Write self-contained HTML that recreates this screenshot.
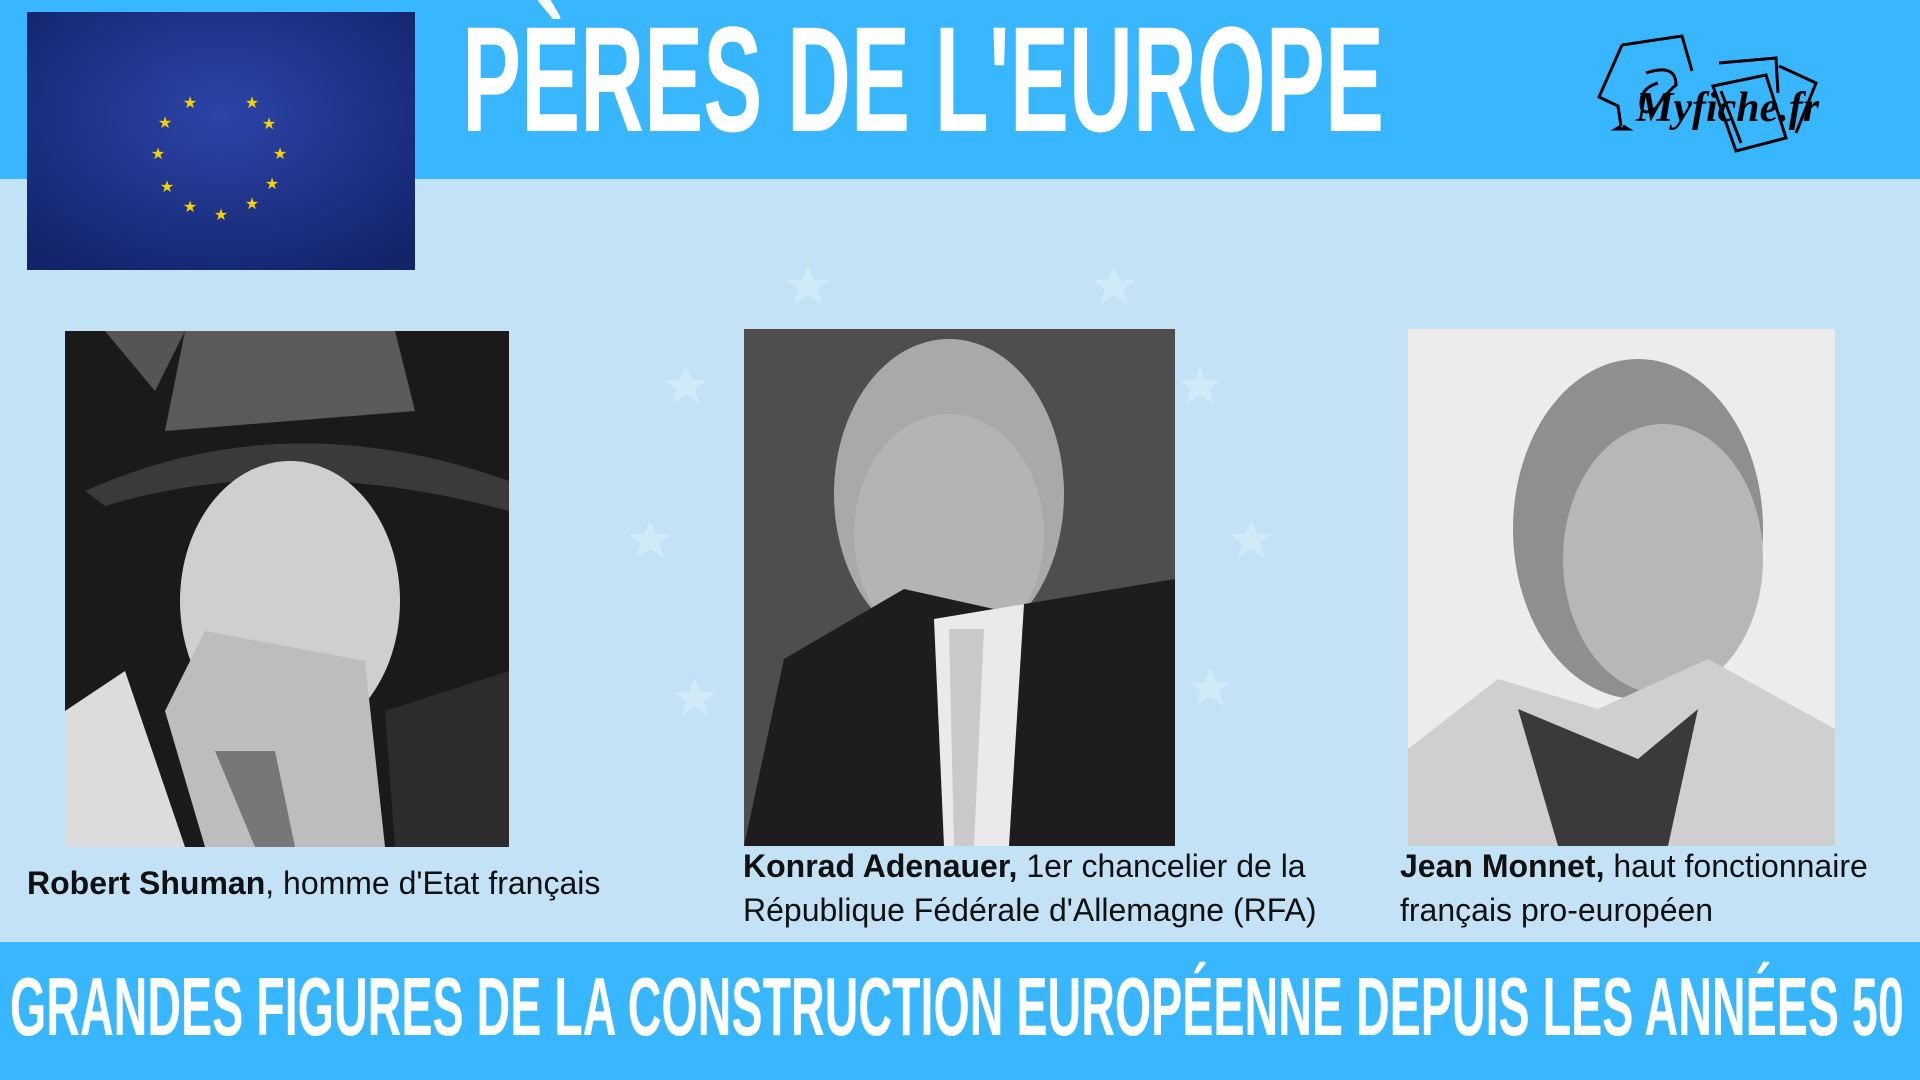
<!DOCTYPE html>
<html><head><meta charset="utf-8"><style>
html,body{margin:0;padding:0}
body{width:1920px;height:1080px;position:relative;overflow:hidden;background:#c4e2f6;font-family:"Liberation Sans",sans-serif}
.top{position:absolute;left:0;top:0;width:1920px;height:179px;background:#38b6ff}
.bot{position:absolute;left:0;top:942px;width:1920px;height:138px;background:#38b6ff}
.fit{position:absolute;white-space:nowrap;color:#fff;font-weight:bold;transform-origin:0 0;line-height:1}
.ph{position:absolute}
.cap{position:absolute;font-size:32px;color:#111;line-height:44px;white-space:nowrap}
.cap b{font-weight:bold}
</style></head><body>
<div class="top"></div>
<div class="bot"></div>
<svg class="ph" style="left:0;top:180px" width="1920" height="760">
<g fill="#d4ecf8" opacity=".8">
<polygon points="808,86 814,100 829,100 817,109 822,124 808,115 794,124 799,109 787,100 802,100"/>
<polygon points="1114,86 1120,100 1135,100 1123,109 1128,124 1114,115 1100,124 1105,109 1093,100 1108,100"/>
<polygon points="686,186 692,200 707,200 695,209 700,224 686,215 672,224 677,209 665,200 680,200"/>
<polygon points="1200,186 1206,200 1221,200 1209,209 1214,224 1200,215 1186,224 1191,209 1179,200 1194,200"/>
<polygon points="650,340 656,354 671,354 659,363 664,378 650,369 636,378 641,363 629,354 644,354"/>
<polygon points="1251,340 1257,354 1272,354 1260,363 1265,378 1251,369 1237,378 1242,363 1230,354 1245,354"/>
<polygon points="695,498 701,512 716,512 704,521 709,536 695,527 681,536 686,521 674,512 689,512"/>
<polygon points="1210,488 1216,502 1231,502 1219,511 1224,526 1210,517 1196,526 1201,511 1189,502 1204,502"/>
</g></svg>
<svg class="ph" style="left:27px;top:12px" width="388" height="258">
<defs><radialGradient id="fg" cx="50%" cy="40%" r="70%"><stop offset="0" stop-color="#2c44a8"/><stop offset="1" stop-color="#13246b"/></radialGradient></defs>
<rect width="388" height="258" fill="url(#fg)"/>
<g fill="#f5d100" font-size="16" text-anchor="middle">
<text x="163" y="96">★</text><text x="225" y="96">★</text><text x="138" y="116">★</text><text x="242" y="117">★</text><text x="131" y="147">★</text><text x="253" y="147">★</text><text x="140" y="180">★</text><text x="245" y="177">★</text><text x="163" y="200">★</text><text x="225" y="197">★</text><text x="194" y="208">★</text>
</g></svg>
<div class="fit" id="t1" style="left:462px;top:4px;font-size:150px">PÈRES DE L'EUROPE</div>
<svg class="ph" style="left:1596px;top:33px" width="230" height="120" fill="none" stroke="#000" stroke-width="3">
<path d="M26,12 L86,3 L96,38 M26,12 L3,64 L22,73 L25,93 M25,93 L20,96 L32,96 L27,93"/>
<path d="M50,40 Q80,30 80,52 Q70,60 60,75 Q45,85 45,70 Q45,55 62,50"/>
<path d="M123,30 L180,25 L182,60 M183,33 L220,50 L200,100 M117,53 L170,42 L190,105 L140,118 Z M125,58 L145,110"/>
<text x="40" y="88" font-family="Liberation Serif,serif" font-style="italic" font-weight="bold" font-size="42" fill="#000" stroke="none">Myfiche.fr</text>
</svg>
<svg class="ph" style="left:65px;top:331px" width="444" height="516">
<rect width="444" height="516" fill="#1a1a1a"/>
<path d="M40,0 L120,0 L90,60 Z" fill="#555"/>
<path d="M120,0 L330,0 L350,80 L100,100 Z" fill="#5a5a5a"/>
<path d="M20,160 Q220,70 444,150 L444,180 Q220,120 40,175 Z" fill="#3a3a3a"/>
<ellipse cx="225" cy="270" rx="110" ry="140" fill="#cfcfcf"/>
<path d="M100,380 L140,300 L300,330 L320,516 L140,516 Z" fill="#bdbdbd"/>
<path d="M0,380 L60,340 L120,516 L0,516 Z" fill="#dcdcdc"/>
<path d="M150,420 L190,516 L230,516 L210,420 Z" fill="#777"/>
<path d="M320,380 L444,340 L444,516 L330,516 Z" fill="#2c2c2c"/>
</svg>
<svg class="ph" style="left:744px;top:329px" width="431" height="517">
<rect width="431" height="517" fill="#4e4e4e"/>
<ellipse cx="205" cy="165" rx="115" ry="155" fill="#a9a9a9"/>
<ellipse cx="205" cy="205" rx="95" ry="120" fill="#b4b4b4"/>
<path d="M0,517 L40,330 L160,260 L250,280 L431,250 L431,517 Z" fill="#1d1d1d"/>
<path d="M190,290 L280,275 L265,517 L200,517 Z" fill="#eaeaea"/>
<path d="M205,300 L240,300 L230,517 L210,517 Z" fill="#c9c9c9"/>
</svg>
<svg class="ph" style="left:1408px;top:329px" width="427" height="517">
<rect width="427" height="517" fill="#ececec"/>
<ellipse cx="230" cy="200" rx="125" ry="170" fill="#8f8f8f"/>
<ellipse cx="255" cy="230" rx="100" ry="135" fill="#b7b7b7"/>
<path d="M0,517 L0,420 L90,350 L190,380 L300,330 L427,400 L427,517 Z" fill="#cfcfcf"/>
<path d="M110,380 L230,430 L290,380 L260,517 L150,517 Z" fill="#3a3a3a"/>
</svg>
<div class="cap" style="left:27px;top:861px"><b>Robert Shuman</b>, homme d'Etat français</div>
<div class="cap" style="left:743px;top:844px"><b>Konrad Adenauer,</b> 1er chancelier de la<br>République Fédérale d'Allemagne (RFA)</div>
<div class="cap" style="left:1400px;top:844px"><b>Jean Monnet,</b> haut fonctionnaire<br>français pro-européen</div>
<div class="fit" id="t2" style="left:10px;top:965px;font-size:83px">GRANDES FIGURES DE LA CONSTRUCTION EUROPÉENNE DEPUIS LES ANNÉES 50</div>
<script>
function fit(id,w){var e=document.getElementById(id);var r=e.scrollWidth;e.style.transform='scaleX('+(w/r)+')';}
fit('t1',922);fit('t2',1894);
</script>
</body></html>
